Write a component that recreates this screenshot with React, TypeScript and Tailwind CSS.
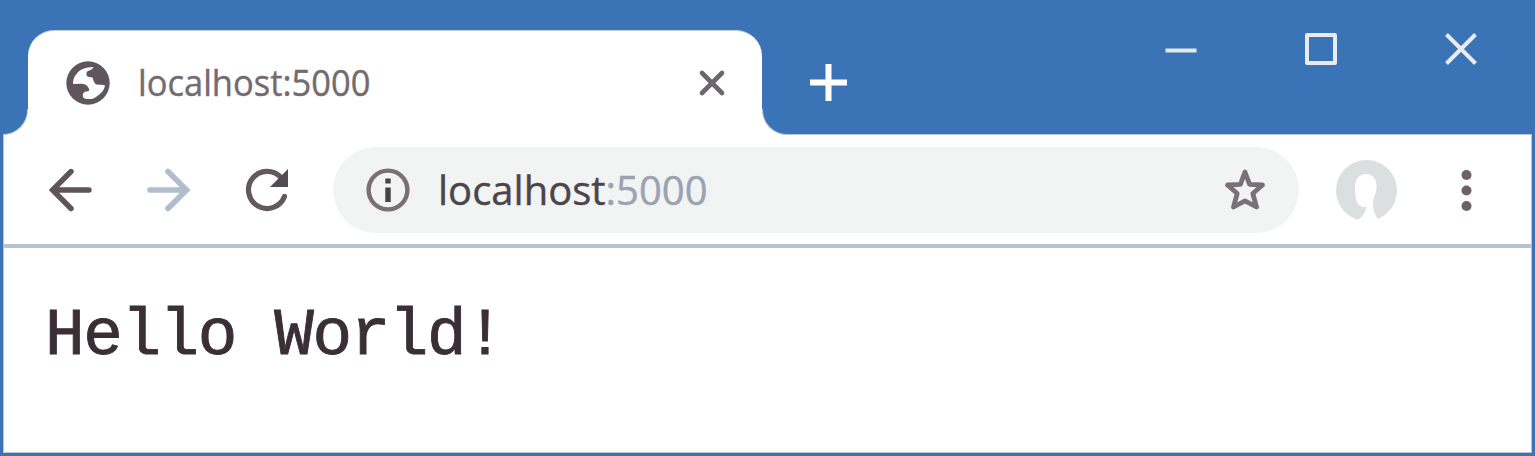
import React from "react";

function Globe() {
  return (
    <svg className="h-[44px] w-[44px] shrink-0" viewBox="0 0 44 44">
      <circle cx="22" cy="22" r="21.7" fill="#5e565b" />
      <path
        d="M7 23C7 19 8 15 11 12.500C13 9 19 6 27.500 6C26 10 21 9 20.500 12C20 15.500 22 16 26.500 16.500C27.500 19 28 23 31 23.500C34 24 37 23.500 39 24.500C38.500 27 37.500 29 36 31C34 33 32.500 34 30 36C27 38 25 38.300 21.500 38C18.500 38 17 37 16.800 35C16.800 32.500 17.500 31 20 30.500C23 30.500 24 29.500 22.500 27C21 23.500 18 22.500 14 22.800Z"
        fill="#fff"
      />
    </svg>
  );
}

function Flare({ side }: { side: "left" | "right" }) {
  return (
    <div className="h-[26px] w-[25px] shrink-0 self-end bg-white">
      <div
        className={
          side === "left"
            ? "h-full w-full rounded-br-[25px] border-r border-b border-[#b9c3d1] bg-[#3b73b7]"
            : "h-full w-full rounded-bl-[25px] border-b border-l border-[#b9c3d1] bg-[#3b73b7]"
        }
      />
    </div>
  );
}

function TitleBar() {
  return (
    <header className="flex h-[135px] shrink-0 pl-[3px]">
      <Flare side="left" />
      <div className="mt-[30px] flex h-[105px] w-[734px] shrink-0 items-center rounded-t-[26px] border-t border-[#c5ccd6] bg-white pl-[38px]">
        <Globe />
        <span className="relative top-[-2px] ml-[28px] w-[233px] origin-left scale-x-[0.932] whitespace-nowrap font-['Open_Sans',sans-serif] text-[37px] leading-none text-[#736b70] [-webkit-text-stroke:0.4px_#736b70]">
          localhost:5000
        </span>
        <svg
          className="ml-[327px] h-[28px] w-[28px]"
          viewBox="0 0 28 28"
          fill="none"
          stroke="#6d666a"
          strokeWidth="4.6"
          strokeLinecap="round"
        >
          <path d="M4 4 24 24M24 4 4 24" />
        </svg>
      </div>
      <Flare side="right" />
      <div className="mr-[3px] flex flex-1 border-b border-[#b9c3d1]">
        <svg className="mt-[64px] ml-[23px] h-[37px] w-[37px]" viewBox="0 0 37 37" fill="none" stroke="#fff" strokeWidth="6">
          <path d="M18.500 0V37M0 18.500H37" />
        </svg>
        <div className="ml-auto flex gap-[108px] pt-[33px] pr-[55px]">
          <svg className="h-[32px] w-[32px]" viewBox="0 0 32 32" fill="none" stroke="#e6e9ec" strokeWidth="4">
            <path d="M0.500 17.500H31.500" />
          </svg>
          <svg className="h-[32px] w-[32px]" viewBox="0 0 32 32" fill="none" stroke="#e9ebee" strokeWidth="4" strokeLinejoin="round">
            <rect x="2" y="2" width="28" height="28" />
          </svg>
          <svg className="h-[32px] w-[32px]" viewBox="0 0 32 32" fill="none" stroke="#e9ebee" strokeWidth="4">
            <path d="M1.500 1.500 30.500 30.500M30.500 1.500 1.500 30.500" />
          </svg>
        </div>
      </div>
    </header>
  );
}

function Toolbar() {
  return (
    <nav className="flex h-[109px] shrink-0 items-center pt-px pl-[45px]">
      <svg
        className="h-[44px] w-[44px] shrink-0"
        viewBox="0 0 44 44"
        fill="none"
        stroke="#5d5559"
        strokeWidth="5.4"
        strokeLinecap="round"
      >
        <path d="M40 22H5M22 3.500 3.500 22 22 40.500" />
      </svg>
      <svg
        className="ml-[54px] h-[44px] w-[44px] shrink-0"
        viewBox="0 0 44 44"
        fill="none"
        stroke="#b1bdcc"
        strokeWidth="5.6"
        strokeLinecap="round"
      >
        <path d="M3 22H38M21 3.500 39.500 22 21 40.500" />
      </svg>
      <svg className="ml-[54px] h-[44px] w-[44px] shrink-0" viewBox="0 0 44 44">
        <path d="M39.500 28.500A18.600 18.600 0 1 1 36 9.500" fill="none" stroke="#62595d" strokeWidth="5.2" strokeLinecap="round" />
        <path d="M43 1V19H25Z" fill="#514b52" />
      </svg>
      <div className="ml-[44px] flex h-[86px] w-[966px] shrink-0 items-center rounded-full bg-[#f2f4f4] pl-[33px]">
        <svg className="h-[44px] w-[44px] shrink-0" viewBox="0 0 44 44">
          <circle cx="22" cy="22" r="19.4" fill="none" stroke="#7a7072" strokeWidth="4.4" />
          <path d="M22 19.500V34M22 10.500V15.500" stroke="#4b4145" strokeWidth="5.4" />
        </svg>
        <span className="ml-[28px] w-[271px] whitespace-nowrap font-['Open_Sans',sans-serif] text-[40px] leading-none text-[#4d454c] [-webkit-text-stroke:0.4px]">
          localhost<span className="text-[#9aa3b2]">:5000</span>
        </span>
        <svg className="ml-[513px] h-[46px] w-[46px] shrink-0" viewBox="0 0 46 46">
          <path
            d="M23 5 27.600 17.300 40.500 18 30.800 26.500 34.500 40 23 33.800 11.500 40 15.200 26.500 5.500 18 18.400 17.300Z"
            fill="none"
            stroke="#7a7177"
            strokeWidth="4.8"
            strokeLinejoin="round"
          />
        </svg>
      </div>
      <svg className="ml-[37px] h-[61px] w-[61px] shrink-0" viewBox="0 0 61 61">
        <circle cx="30.500" cy="30.500" r="30.500" fill="#dbdfe0" />
        <path
          d="M19 30C18.500 19 23 14 30 14C37 14 41 19 40.500 28C40 34 37 38 37 44C37 50 39 55 43 61H21C26 57 30 52 30.500 47C22 48 19.500 42 19 30Z"
          fill="#fff"
        />
      </svg>
      <svg className="ml-[64px] h-[44px] w-[11px] shrink-0" viewBox="0 0 11 44" fill="#6b6267">
        <circle cx="5.500" cy="7" r="5" />
        <circle cx="5.500" cy="22.500" r="5" />
        <circle cx="5.500" cy="38" r="5" />
      </svg>
    </nav>
  );
}

export default function App() {
  return (
    <div className="flex h-[456px] w-[1535px] flex-col overflow-hidden bg-[#3b73b7]">
      <TitleBar />
      <div className="ml-[3px] flex h-[318px] w-[1529px] flex-col border-r border-b border-l border-[#b9c3d1] bg-white">
        <Toolbar />
        <div className="h-[4px] shrink-0 bg-[#b9c3cf]" />
        <main className="pt-[53px] pl-[41px]">
          <p className="whitespace-pre font-['Liberation_Mono',monospace] text-[66px] leading-[72px] tracking-[-1.4px] text-[#3a2f35] [-webkit-text-stroke:0.9px_#3a2f35]">
            Hello World!
          </p>
        </main>
      </div>
    </div>
  );
}
